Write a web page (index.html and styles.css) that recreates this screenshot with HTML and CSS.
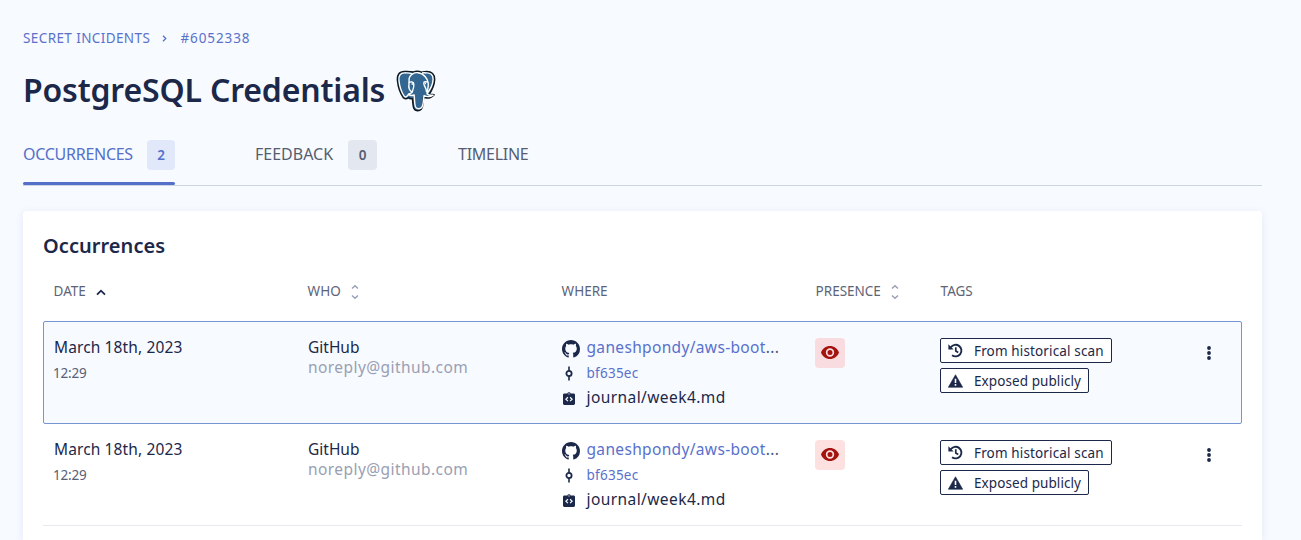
FILE: index.html
```
<!DOCTYPE html>
<html lang="en">
<head>
<meta charset="utf-8">
<title>PostgreSQL Credentials</title>
<link rel="stylesheet" href="styles.css">
</head>
<body>
<svg class="sprite" aria-hidden="true">
  <symbol id="github" viewBox="0 0 16 16"><path d="M8 0C3.58 0 0 3.58 0 8c0 3.54 2.29 6.53 5.47 7.59.4.07.55-.17.55-.38 0-.19-.01-.82-.01-1.49-2.01.37-2.53-.49-2.69-.94-.09-.23-.48-.94-.82-1.13-.28-.15-.68-.52-.01-.53.63-.01 1.08.58 1.23.82.72 1.21 1.87.87 2.33.66.07-.52.28-.87.51-1.07-1.78-.2-3.64-.89-3.64-3.95 0-.87.31-1.59.82-2.15-.08-.2-.36-1.02.08-2.12 0 0 .67-.21 2.2.82.64-.18 1.32-.27 2-.27s1.36.09 2 .27c1.53-1.04 2.2-.82 2.2-.82.44 1.1.16 1.92.08 2.12.51.56.82 1.27.82 2.15 0 3.07-1.87 3.75-3.65 3.95.29.25.54.73.54 1.48 0 1.07-.01 1.93-.01 2.2 0 .21.15.46.55.38A8.01 8.01 0 0 0 16 8c0-4.42-3.58-8-8-8z"/></symbol>
  <symbol id="commit" viewBox="0 0 14 16"><path d="M7 .5v4.6M7 10.9v4.6" fill="none" stroke="currentColor" stroke-width="1.7"/><circle cx="7" cy="8" r="2.8" fill="none" stroke="currentColor" stroke-width="1.9"/></symbol>
  <symbol id="file" viewBox="0 0 12 13"><path fill-rule="evenodd" d="M1.400 1.500h2.900a1.800 1.800 0 0 1 3.400 0h2.900c.8 0 1.400.6 1.400 1.300v8.800c0 .8-.6 1.400-1.400 1.400H1.400C.6 13 0 12.400 0 11.600V2.800c0-.7.6-1.300 1.400-1.300zM6 1.300a.6.6 0 1 0 0 1.200.6.6 0 0 0 0-1.200z"/><path d="M4.900 5.300 2.900 7.200l2 1.900M7.100 5.300l2 1.900-2 1.900" fill="none" stroke="#f7faff" stroke-width="1.200"/></symbol>
  <symbol id="eye" viewBox="0 0 18 13"><path fill-rule="evenodd" d="M9 0C4.900 0 1.500 2.600 0 6.500 1.500 10.400 4.900 13 9 13s7.500-2.600 9-6.500C16.500 2.600 13.100 0 9 0zm0 10.700a4.200 4.200 0 1 1 0-8.400 4.200 4.200 0 0 1 0 8.400zM9 4a2.500 2.500 0 1 0 0 5 2.500 2.500 0 0 0 0-5z"/></symbol>
  <symbol id="history" viewBox="0 0 16 16"><path d="M3 4.600A6.200 6.200 0 1 1 4.300 13" fill="none" stroke="currentColor" stroke-width="2"/><path d="M.4 1.200v5.600H6z"/><path d="M8.300 4.500v4l2.600 1.600" fill="none" stroke="currentColor" stroke-width="1.800"/></symbol>
  <symbol id="warning" viewBox="0 0 16 14"><path d="M8 .3 15.700 13.700H.3z" stroke="currentColor" stroke-width=".6" stroke-linejoin="round"/><path d="M8 4.600v4.600M8 10.300v1.800" stroke="#fff" stroke-width="1.700"/></symbol>
  <symbol id="sort" viewBox="0 0 8 16"><path d="M1 4.500 4 1.700l3 2.800M1 11.500l3 2.800 3-2.800" fill="none" stroke="currentColor" stroke-width="1.500"/></symbol>
  <symbol id="dots" viewBox="0 0 4 14"><circle cx="2" cy="2" r="1.900"/><circle cx="2" cy="7" r="1.900"/><circle cx="2" cy="12" r="1.900"/></symbol>
</svg>

<nav class="crumbs">
  <a class="crumb-root">SECRET INCIDENTS</a>
  <svg class="crumb-sep" viewBox="0 0 5 7"><path d="M1 .8 3.800 3.500 1 6.200" fill="none" stroke="currentColor" stroke-width="1.300"/></svg>
  <a class="crumb-id">#6052338</a>
</nav>

<header class="heading">
  <h1 class="title">PostgreSQL Credentials</h1>
  <svg class="postgres" viewBox="0 0 40 42">
    <path d="M9 1.500C3 1.300.8 5 1.500 11c.5 5 3 12.500 5.500 16.200 1.500 2 3.600 2 5.200.5 1.200 1 2.600 1.300 4.300 1 .3 4 .4 7.500 1.400 9.800 1.200 2.800 5.500 2.900 7.500.5 1.800-2.300 1.700-6.500 2.100-11.400 3.500.9 7.800.4 10.600-2.900-1.500-.5-3 .1-5-.3 2.700-4 5.200-9.700 5.500-14.500.3-5.700-3-8.400-8-8.400-2 0-3.500.5-5 .8-2.200-.9-5.200-1.300-8-.4C15 1.400 12 1.500 9 1.500z" fill="#336791" stroke="#101820" stroke-width="1.500" stroke-linejoin="round"/>
    <path d="M9 2.900C4.300 2.700 2.400 5.500 3 11c.5 4.600 2.900 11.800 5.200 15.200 1 1.400 2.400.7 3.400-.7l1.400-1.700M30 2.900c4.300-.2 7.200 1.800 7.100 6.300-.2 4.600-3.200 10.800-6.100 14.600 1.500 1.800 3.800 1.600 6.100 1.400-2.700 1.700-6.300 1.600-9 .4-1 4.500-.4 10.500-2.900 12.300-1.800 1.200-4.800 1.200-5.800-1.200-1-2.500-.7-6.500-1.200-11.700-2 .7-4.200.7-5.600-.8 1.600-.4 2.600-1 3.500-2-2.700-1.800-3.800-4.700-3.100-8.400.4-2.300-.4-4.500.4-6.300C14.500 4.700 18 2.300 22 2.700c6 .6 9.500 6 10.200 10.200.5 3.500-.7 6.500-1.200 10.900M12.800 12.800c2-1.500 4.700-1 5 1 .4 3.500-1 6.400-1.700 8.600M31.800 12.200c-1.800-.9-4-.6-4 .7 0 3.300 2.700 5 2.600 8.700" fill="none" stroke="#fff" stroke-width="1.400" stroke-linecap="round" stroke-linejoin="round"/>
    <path d="M9 2.900C12 2.700 14 3 16 3.600M26 3c1.500-.3 2.500-.2 4-.1M15.500 14h1.600M29 13.500h1" fill="none" stroke="#fff" stroke-width="1.400"/>
  </svg>
</header>

<div class="tabs">
  <a class="tab tab-active"><span class="t-occ">OCCURRENCES</span><b class="count">2</b></a>
  <a class="tab"><span>FEEDBACK</span><b class="count count-muted">0</b></a>
  <a class="tab"><span class="t-time">TIMELINE</span></a>
</div>

<main class="card">
  <h2 class="card-title">Occurrences</h2>
  <div class="grid head">
    <div class="th"><span>DATE</span><svg class="asc" viewBox="0 0 10 7"><path d="M1 5.700 5 1.700l4 4" fill="none" stroke="currentColor" stroke-width="1.800"/></svg></div>
    <div class="th"><span>WHO</span><svg class="sort"><use href="#sort"/></svg></div>
    <div class="th"><span>WHERE</span></div>
    <div class="th"><span>PRESENCE</span><svg class="sort"><use href="#sort"/></svg></div>
    <div class="th"><span>TAGS</span></div>
  </div>

  <div class="grid row row-selected">
    <div><div class="line"><span class="date">March 18th, 2023</span></div><div class="line-time"><span class="time">12:29</span></div></div>
    <div><div class="line"><span class="who">GitHub</span></div><div class="line"><span class="email">noreply@github.com</span></div></div>
    <div class="where">
      <div class="src"><svg class="i-github"><use href="#github"/></svg><span class="repo">ganeshpondy/aws-boot<i>...</i></span></div>
      <div class="src"><svg class="i-commit"><use href="#commit"/></svg><span class="sha">bf635ec</span></div>
      <div class="src"><svg class="i-file"><use href="#file"/></svg><span class="path">journal/week4.md</span></div>
    </div>
    <div><div class="eye"><svg><use href="#eye"/></svg></div></div>
    <div class="tags">
      <div class="tag"><svg class="i-history"><use href="#history"/></svg><span>From historical scan</span></div>
      <div class="tag"><svg class="i-warning"><use href="#warning"/></svg><span>Exposed publicly</span></div>
    </div>
    <div class="menu"><svg><use href="#dots"/></svg></div>
  </div>

  <div class="grid row">
    <div><div class="line"><span class="date">March 18th, 2023</span></div><div class="line-time"><span class="time">12:29</span></div></div>
    <div><div class="line"><span class="who">GitHub</span></div><div class="line"><span class="email">noreply@github.com</span></div></div>
    <div class="where">
      <div class="src"><svg class="i-github"><use href="#github"/></svg><span class="repo">ganeshpondy/aws-boot<i>...</i></span></div>
      <div class="src"><svg class="i-commit"><use href="#commit"/></svg><span class="sha">bf635ec</span></div>
      <div class="src"><svg class="i-file"><use href="#file"/></svg><span class="path">journal/week4.md</span></div>
    </div>
    <div><div class="eye"><svg><use href="#eye"/></svg></div></div>
    <div class="tags">
      <div class="tag"><svg class="i-history"><use href="#history"/></svg><span>From historical scan</span></div>
      <div class="tag"><svg class="i-warning"><use href="#warning"/></svg><span>Exposed publicly</span></div>
    </div>
    <div class="menu"><svg><use href="#dots"/></svg></div>
  </div>
</main>
</body>
</html>
```
FILE: styles.css
```
* { box-sizing: border-box; }
body {
  margin: 0;
  height: 540px;
  overflow: hidden;
  padding: 28px 39px 0 23px;
  background: #f7faff;
  color: #1c2849;
  font: 15.5px/20px "Noto Sans", "Open Sans", sans-serif;
}
svg { display: block; flex: none; fill: currentColor; }
span { white-space: nowrap; }
.sprite { display: none; }

.crumbs { display: flex; align-items: center; height: 20px; color: #5971cb; font-size: 13.5px; }
.crumb-root { width: 139px; letter-spacing: .4px; white-space: nowrap; }
.crumb-sep { width: 5px; height: 7px; margin: 1px 13px 0 0; }
.crumb-id { padding-left: .5px; letter-spacing: .9px; }

.heading { display: flex; align-items: center; height: 42px; margin-top: 22px; }
.title { width: 373px; margin: 0; padding-bottom: 2px; font-size: 32px; line-height: 40px; font-weight: 600; letter-spacing: -.17px; white-space: nowrap; }
.postgres { width: 40px; height: 42px; }

.tabs { display: flex; gap: 80px; height: 46px; margin-top: 28px; border-bottom: 1px solid #ccd5e3; color: #565d70; font-size: 16px; }
.tab { display: flex; justify-content: space-between; align-items: center; height: 45px; padding-bottom: 15px; }
.tab span { padding-bottom: 2px; }
.tab:nth-child(1) { width: 152px; }
.tab:nth-child(2) { width: 122px; }
.t-occ, .t-time { letter-spacing: -.27px; }
.t-time { padding-left: 1px; }
.tab-active { position: relative; color: #5570c9; }
.tab-active::after { content: ""; position: absolute; left: 0; right: 0; bottom: 0; height: 3px; border-radius: 2px; background: #5570c9; }
.count { width: 28px; height: 30px; border-radius: 4px; background: #e1e8fa; font-size: 13.5px; line-height: 30px; font-weight: 600; text-align: center; }
.count-muted { width: 29px; background: #e3e7f0; }

.card { height: 329px; margin-top: 25px; padding: 24px 20px 0; border-radius: 4px 4px 0 0; background: #fff; box-shadow: 0 2px 8px rgba(40, 60, 110, .09); }
.card-title { margin: 0; font-size: 20px; line-height: 22px; font-weight: 600; letter-spacing: .05px; }
.grid { display: grid; grid-template-columns: 254px 254px 254px 125px 1fr 35px; padding-left: 10px; }
.head { height: 24px; margin: 23px 0 17px; color: #5d6477; font-size: 13.5px; }
.th { display: flex; align-items: center; }
.th span { padding: 0 0 2px .6px; }
.asc { width: 10px; height: 7px; margin-left: 10px; color: #1c2849; }
.sort { width: 8px; height: 16px; margin-left: 10.4px; color: #9aa1b3; }

.row { height: 103px; padding-top: 17px; border-bottom: 1px solid #e6e9f0; }
.row-selected { margin-bottom: -1px; padding: 16px 0 0 9px; border: 1px solid #7595d3; border-radius: 2px; background: #f7faff; }
.row:not(.row-selected) .menu { padding-right: 1px; }
.line { height: 20px; padding-left: 1px; line-height: 18px; }
.line-time { padding-top: 4px; }
.date { letter-spacing: .12px; }
.time { color: #596076; font-size: 13.5px; letter-spacing: -.2px; }
.email { color: #99a0b3; letter-spacing: .43px; }
.src { display: grid; grid-template-columns: 25px auto; align-items: center; height: 20px; }
.src:nth-child(2) { height: 30px; }
.src:nth-child(3) { height: 18px; }
.src span { padding: 0 0 2px .5px; line-height: 18px; }
.src .repo { padding-bottom: 3px; }
.src .sha { padding-bottom: 0; }
.i-github { width: 18px; height: 18px; margin-left: 1px; }
.i-commit { width: 14px; height: 15px; margin-left: 1px; }
.i-file { width: 12px; height: 13px; margin-left: 2px; }
.repo, .sha { color: #5971cb; }
.repo { letter-spacing: .34px; }
.repo i { font-style: normal; color: #4c5878; }
.sha { font-size: 13.5px; letter-spacing: .25px; }
.path { letter-spacing: .42px; }
.eye { display: grid; place-items: center; width: 30px; height: 30px; border-radius: 4px; background: #f8dcdf; color: #a4130e; }
.row:not(.row-selected) .eye { background: #fde1e1; }
.eye svg { width: 18px; height: 13px; margin-bottom: 1px; }
.tags { display: grid; justify-items: start; align-content: start; gap: 5px; }
.tag { display: flex; align-items: center; width: 172px; height: 25px; padding-left: 7px; border: 1px solid #1c2849; border-radius: 2px; background: #fff; font-size: 13.5px; letter-spacing: .14px; }
.tag + .tag { width: 149px; letter-spacing: .08px; }
.tag svg { width: 15px; height: 15px; margin-right: 11px; }
.tag .i-warning { height: 14px; }
.menu svg { width: 4px; height: 14px; margin: 8px 0 0 1px; }
.row:not(.row-selected) .menu svg { margin-left: 0; }
```
